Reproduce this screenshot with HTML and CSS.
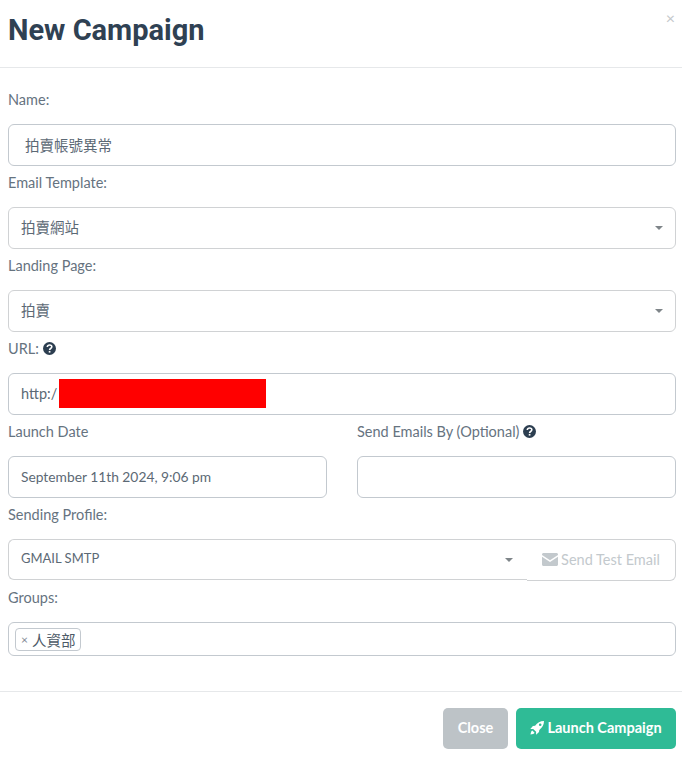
FILE: index.html
```html
<!DOCTYPE html>
<html lang="en">

<head>
    <meta charset="UTF-8">
    <meta name="viewport" content="width=device-width, initial-scale=1.0">
    <title>New Campaign</title>
    <link rel="stylesheet" href="styles.css">
</head>

<body>

    <div class="modal-header">
        <h1>New Campaign</h1>
        <span class="close-x">×</span>
    </div>

    <div class="modal-body">
        <div class="field">
            <label>Name:</label>
            <div class="control name-control">拍賣帳號異常</div>
        </div>

        <div class="field">
            <label>Email Template:</label>
            <div class="control select">拍賣網站<span class="caret"></span></div>
        </div>

        <div class="field">
            <label>Landing Page:</label>
            <div class="control select">拍賣<span class="caret"></span></div>
        </div>

        <div class="field">
            <label>URL:
                <svg class="help" viewBox="0 0 14 14">
                    <circle cx="7" cy="7" r="7" fill="#2c3e50" />
                    <path d="M4.6 5.4C4.8 3.9 5.8 3.2 7.1 3.2c1.400 0 2.400.9 2.400 2 0 1.800-2.400 1.800-2.400 3.300" fill="none" stroke="#fff" stroke-width="1.7" />
                    <rect x="6.2" y="9.6" width="1.8" height="1.8" fill="#fff" />
                </svg>
            </label>
            <div class="control url-control">http:/<span class="redacted"></span></div>
        </div>

        <div class="date-row">
            <div class="field">
                <label>Launch Date</label>
                <div class="control date-value">September 11th 2024, 9:06 pm</div>
            </div>
            <div class="field">
                <label>Send Emails By (Optional)
                    <svg class="help" viewBox="0 0 14 14">
                        <circle cx="7" cy="7" r="7" fill="#2c3e50" />
                        <path d="M4.6 5.4C4.8 3.9 5.8 3.2 7.1 3.2c1.400 0 2.400.9 2.400 2 0 1.800-2.400 1.800-2.400 3.300" fill="none" stroke="#fff" stroke-width="1.7" />
                        <rect x="6.2" y="9.6" width="1.8" height="1.8" fill="#fff" />
                    </svg>
                </label>
                <div class="control"></div>
            </div>
        </div>

        <div class="field">
            <label>Sending Profile:</label>
            <div class="input-group">
                <div class="control select">GMAIL SMTP<span class="caret"></span></div>
                <div class="test-btn">
                    <svg class="mail" viewBox="0 0 16 13">
                        <path d="M0 1.500C0 .7.7 0 1.500 0h13c.8 0 1.500.7 1.500 1.500v.6L8 7.200 0 2.100z" />
                        <path d="M0 3.700v7.800c0 .8.7 1.500 1.500 1.500h13c.8 0 1.500-.7 1.500-1.500V3.700L8 8.900z" />
                    </svg>
                    Send Test Email
                </div>
            </div>
        </div>

        <div class="field">
            <label>Groups:</label>
            <div class="control tags">
                <span class="tag"><span class="tag-x">×</span>人資部</span>
            </div>
        </div>
    </div>

    <div class="modal-footer">
        <button class="btn btn-close">Close</button>
        <button class="btn btn-launch">
            <svg class="rocket" viewBox="0 0 14 14">
                <path fill-rule="evenodd" d="M14 0C10.300 0 7.300 1.700 5.100 4.700L2.900 5 .3 7.900h2.900L6.100 10.800v2.900L9 11.100l.3-2.200C12.300 6.700 14 3.700 14 0zM10.200 2.500a1.300 1.300 0 1 1 0 2.600 1.300 1.300 0 0 1 0-2.600z" />
                <path d="M2.300 9.400c-1 .6-1.600 2.100-1.800 4.100 2-.2 3.500-.8 4.100-1.800z" />
            </svg>
            Launch Campaign
        </button>
    </div>

</body>

</html>
```

FILE: styles.css
```css
body {
    font-family: Lato, "Noto Sans CJK TC", sans-serif;
    font-size: 14.5px;
    color: #66737f;
    background-color: white;
    margin: 0;
}

.modal-header {
    display: flex;
    justify-content: space-between;
    height: 67px;
    padding: 0 7px 0 8px;
    border-bottom: 1px solid #e6e8ea;
}

h1 {
    font-family: Roboto, sans-serif;
    font-size: 29px;
    font-weight: 700;
    line-height: 60px;
    margin: 0;
    color: #2f4153;
}

.close-x {
    font-size: 16px;
    line-height: 36px;
    color: #c4c8cb;
}

.modal-body {
    padding: 15px 6px 0 8px;
}

label {
    display: block;
    height: 20px;
    line-height: 20px;
    margin: 7px 0 14px;
}

.control {
    display: flex;
    align-items: center;
    box-sizing: border-box;
    height: 42px;
    padding: 0 12px 2px;
    border: 1px solid #c3c9cf;
    border-radius: 6px;
    color: #5c6975;
}

.name-control {
    padding-left: 16px;
}

.date-value {
    font-size: 13.8px;
}

.url-control .redacted {
    width: 207px;
    height: 29px;
    margin-left: 2px;
    background-color: #ff0000;
}

.select {
    justify-content: space-between;
    padding-bottom: 4px;
    border-color: #d0d2d4;
}

.caret {
    width: 0;
    height: 0;
    margin-top: 4px;
    border-left: 4px solid transparent;
    border-right: 4px solid transparent;
    border-top: 4px solid #7f8589;
}

.help {
    width: 13px;
    height: 13px;
    vertical-align: -1px;
}

.date-row {
    display: flex;
    gap: 30px;
}

.date-row .field {
    flex: 1;
}

.input-group {
    display: flex;
}

.input-group .select {
    flex: 1;
    height: 41px;
    padding-right: 14px;
    border-right: none;
    border-radius: 6px 0 0 6px;
    font-size: 13px;
}

.test-btn {
    display: flex;
    align-items: center;
    justify-content: center;
    gap: 3px;
    box-sizing: border-box;
    width: 149px;
    height: 42px;
    padding-bottom: 2px;
    border: 1px solid #d0d2d4;
    border-left: none;
    border-radius: 0 6px 6px 0;
    color: #c3c9cd;
}

.mail {
    width: 16px;
    height: 13px;
    fill: #c3c9cd;
}

.tags {
    height: 34px;
    padding: 0 6px;
}

.tag {
    display: flex;
    align-items: center;
    height: 21px;
    padding: 0 5px;
    border: 1px solid #c3c9cf;
    border-radius: 4px;
    color: #4c5a67;
}

.tag-x {
    margin-right: 4px;
    font-size: 12px;
    color: #7f8a94;
}

.modal-footer {
    display: flex;
    justify-content: flex-end;
    gap: 8px;
    margin-top: 35px;
    padding: 16px 6px 9px 0;
    border-top: 1px solid #e6e8ea;
}

.btn {
    display: flex;
    align-items: center;
    justify-content: center;
    gap: 3px;
    height: 41px;
    padding: 0 0 2px;
    border: none;
    border-radius: 5px;
    font-family: inherit;
    font-size: 14.5px;
    font-weight: 700;
    color: white;
}

.btn-close {
    width: 65px;
    background-color: #bdc3c7;
}

.btn-launch {
    width: 160px;
    background-color: #2fbb96;
}

.rocket {
    width: 14px;
    height: 14px;
    fill: white;
}
```
